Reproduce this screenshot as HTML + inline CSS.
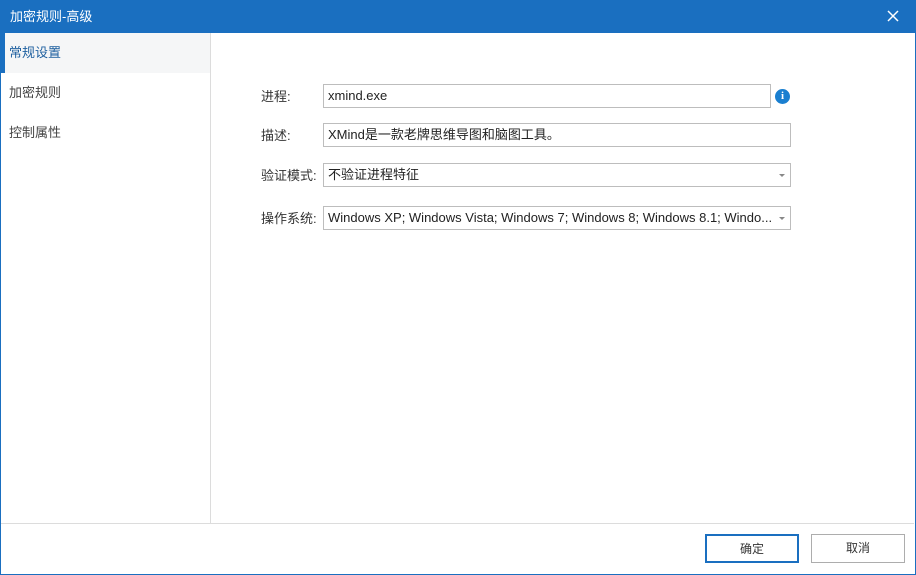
<!DOCTYPE html>
<html><head><meta charset="utf-8"><style>
*{margin:0;padding:0;box-sizing:border-box}
body{width:916px;height:575px;overflow:hidden;background:#fff;font-family:"Liberation Sans","Noto Sans CJK SC",sans-serif;font-size:13px;color:#333;position:relative}
.win{position:absolute;left:0;top:0;width:916px;height:575px;border:1px solid #1a6fc0;border-top:none}
.title{position:absolute;left:0;top:0;width:916px;height:33px;background:#1a6fc0;color:#fff;font-size:13px;line-height:33px;padding-left:10px}
.close{position:absolute;right:14px;top:7px;width:18px;height:18px}
.side{position:absolute;left:1px;top:33px;width:210px;height:490px;border-right:1px solid #dcdcdc}
.item{height:40px;line-height:40px;padding-left:8px;color:#444}
.item.act{background:#f5f6f7;color:#1d5f9f;border-left:4px solid #1a6fc0;padding-left:4px}
.lbl{position:absolute;left:261px;color:#333;line-height:18px}
.inp{position:absolute;left:323px;width:468px;height:24px;border:1px solid #bdbdbd;padding-left:4px;line-height:22px;color:#222;white-space:nowrap;overflow:hidden}
.arrow{position:absolute;right:5px;top:10px;width:0;height:0;border-left:3px solid transparent;border-right:3px solid transparent;border-top:3px solid #888}
.info{position:absolute;left:775px;top:89px;width:15px;height:15px;border-radius:50%;background:#1a7fd0;color:#fff;font-size:11px;font-weight:bold;text-align:center;line-height:15px;font-family:"Liberation Serif",serif}
.foot{position:absolute;left:1px;top:523px;width:913px;height:1px;background:#dcdcdc}
.btn{position:absolute;top:534px;height:29px;width:94px;border:1px solid #adadad;background:#fff;text-align:center;line-height:27px;font-size:12px}
</style></head><body>
<div class="win"></div>
<div class="title">加密规则-高级
<svg class="close" viewBox="0 0 18 18"><path d="M4 4L14 14M14 4L4 14" stroke="#fff" stroke-width="1.5"/></svg></div>
<div class="side">
<div class="item act">常规设置</div>
<div class="item">加密规则</div>
<div class="item">控制属性</div>
</div>
<div class="lbl" style="top:88px">进程:</div>
<div class="inp" style="top:84px;width:448px">xmind.exe</div>
<div class="info">i</div>
<div class="lbl" style="top:127px">描述:</div>
<div class="inp" style="top:123px">XMind是一款老牌思维导图和脑图工具。</div>
<div class="lbl" style="top:167px">验证模式:</div>
<div class="inp" style="top:163px">不验证进程特征<span class="arrow"></span></div>
<div class="lbl" style="top:210px">操作系统:</div>
<div class="inp" style="top:206px">Windows XP; Windows Vista; Windows 7; Windows 8; Windows 8.1; Windo...<span class="arrow"></span></div>
<div class="foot"></div>
<div class="btn" style="left:705px;border:2px solid #1a6fc0">确定</div>
<div class="btn" style="left:811px">取消</div>
</body></html>
